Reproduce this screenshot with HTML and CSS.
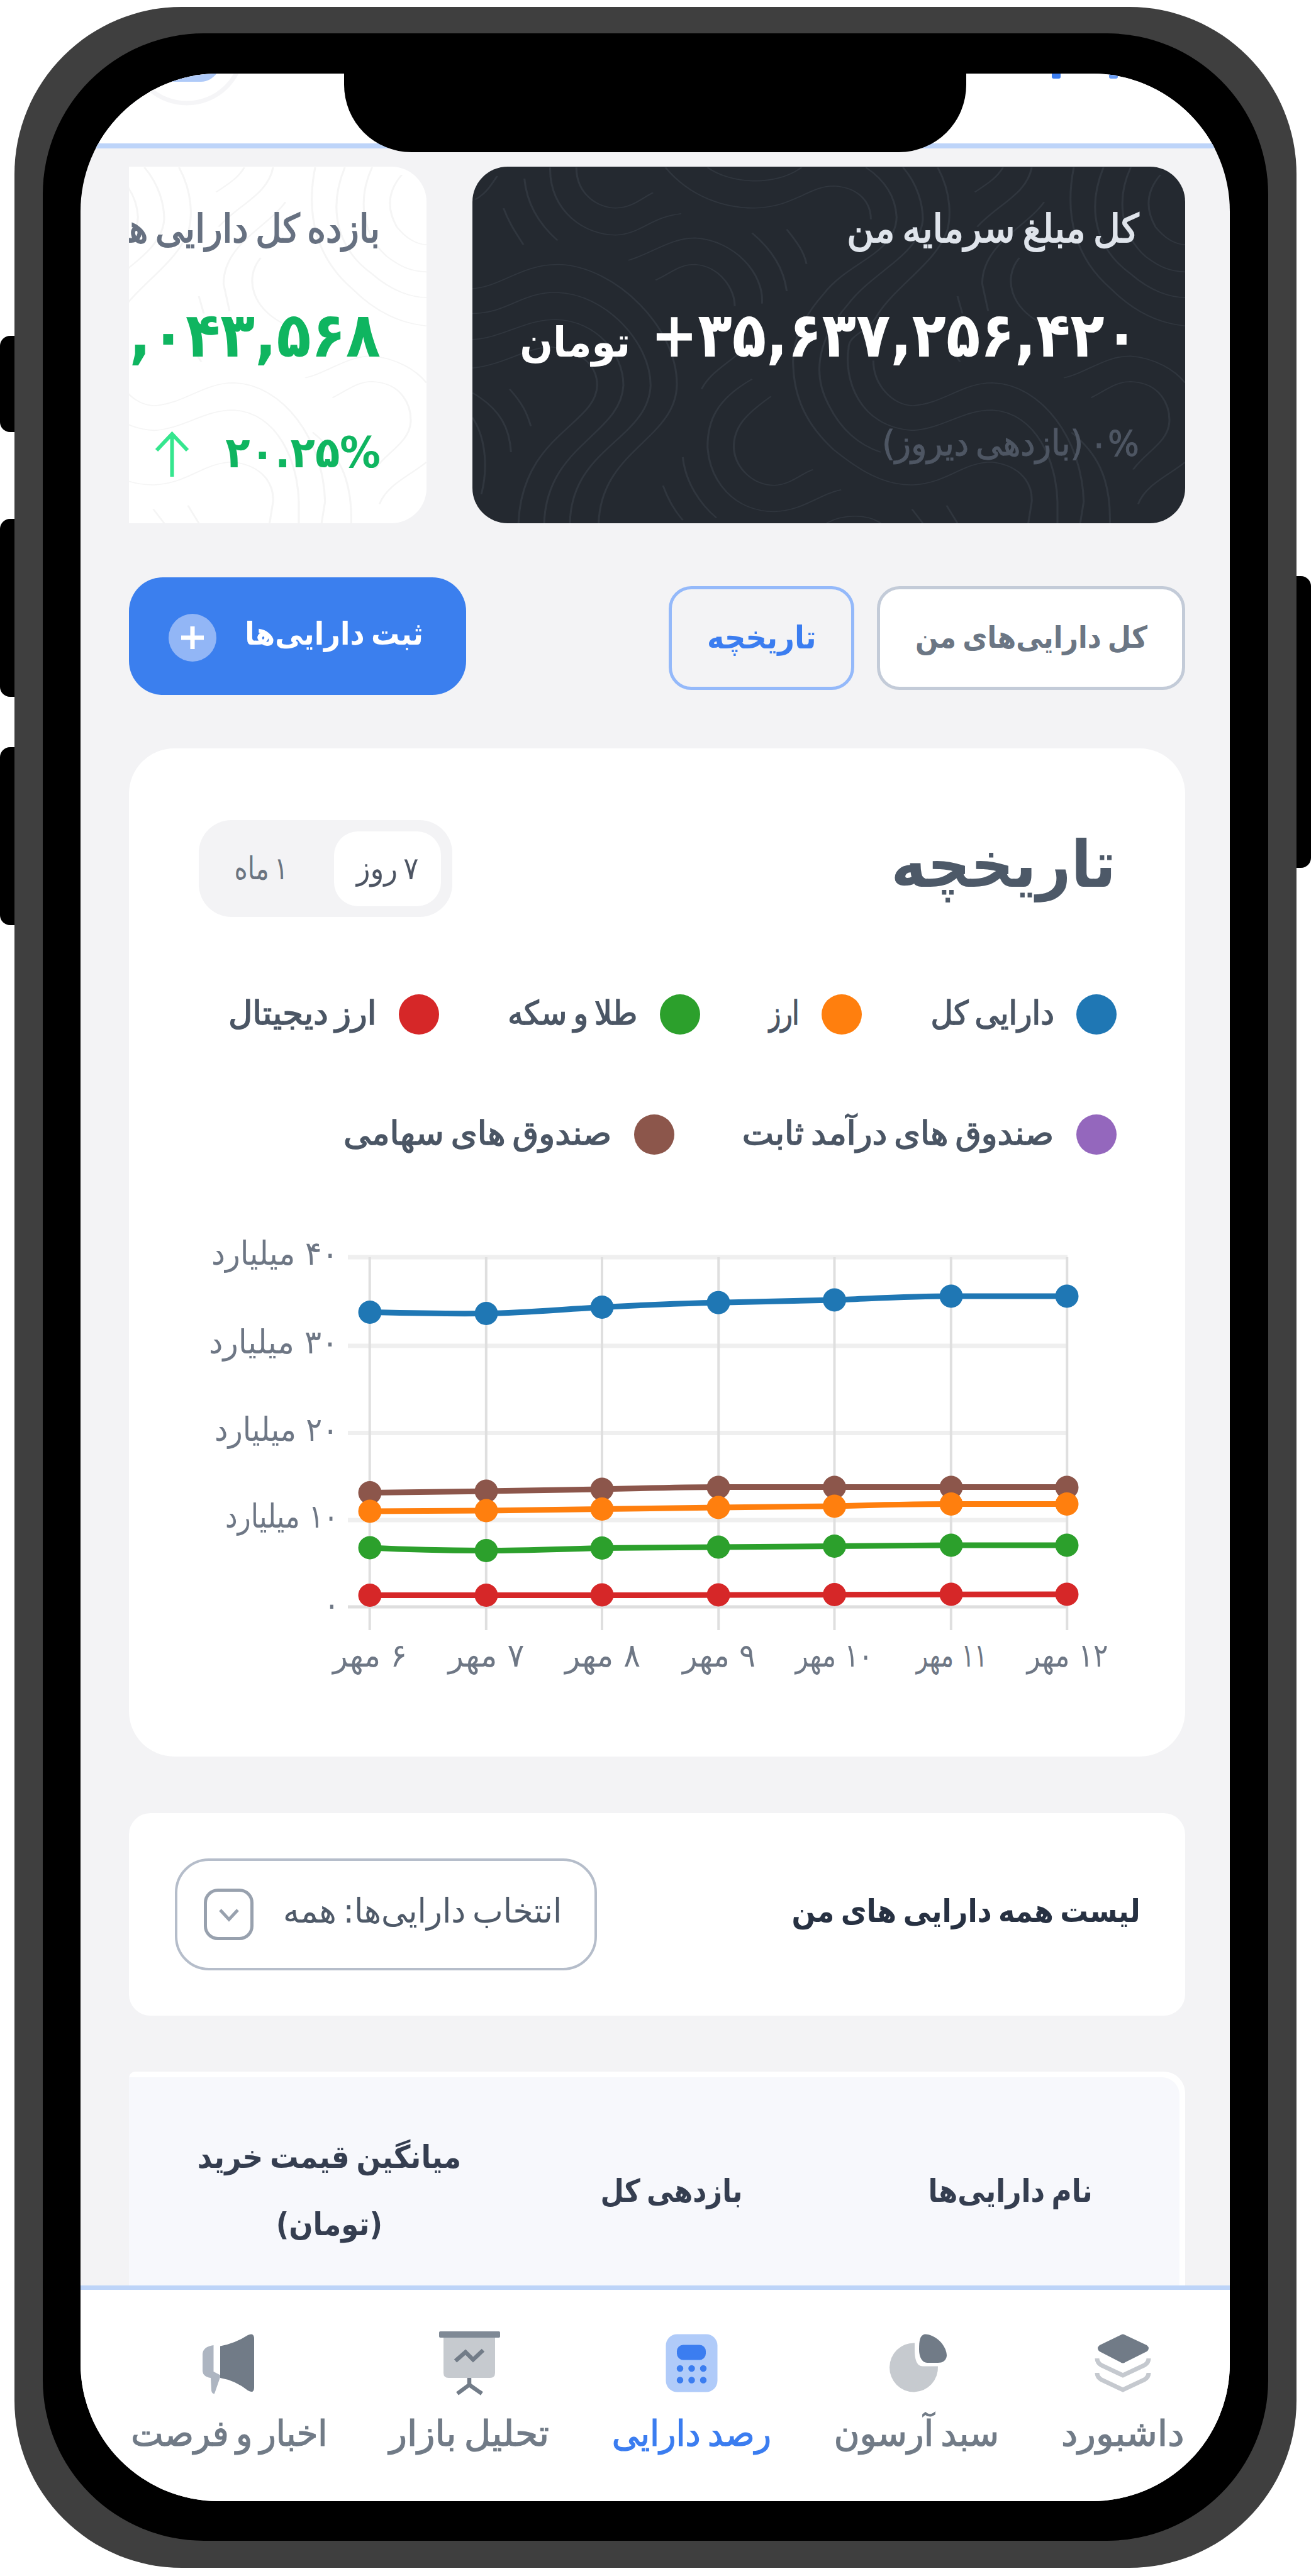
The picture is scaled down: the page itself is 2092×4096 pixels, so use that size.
FILE: index.html
```html
<!DOCTYPE html>
<html lang="fa" dir="rtl">
<head>
<meta charset="utf-8">
<title>رصد دارایی</title>
<link rel="stylesheet" href="styles.css">
</head>
<body>
<svg class="defs" width="0" height="0">
  <symbol id="contours" viewBox="90 47 1440 1440" preserveAspectRatio="none">
    <path d="M95 180C115 160 125 130 140 85M195 95C200 200 225 280 262 345M153 215C165 280 180 320 193 362M247 50C245 230 320 325 380 323C430 320 450 250 512 237M300 50C300 160 345 215 380 214C415 212 435 170 455 152M480 50C530 170 600 215 660 214C740 210 770 125 820 125C870 130 895 190 895 260M565 50C610 115 700 130 755 50M885 50C930 110 945 180 947 250C945 400 850 430 800 560C760 650 735 750 738 850C740 980 765 1090 820 1190C870 1270 920 1335 980 1332C1050 1325 1080 1240 1140 1240C1200 1255 1222 1330 1220 1400L1213 1487M960 50C990 120 1000 200 1000 260C995 400 900 470 850 600C780 760 780 900 810 1010C835 1110 870 1170 915 1200M1030 50C1060 160 1055 260 1050 300C1030 430 950 520 910 640C890 720 850 720 850 780C840 900 870 1100 980 1112C1040 1105 1080 1030 1140 1030C1230 1040 1270 1240 1272 1400V1487M900 830C900 930 940 1012 980 1012C1040 1005 1080 920 1140 920C1240 925 1322 1150 1325 1400L1318 1487M1300 1120C1350 1200 1380 1300 1378 1487"/>
    <path d="M405 425C450 400 490 335 540 335C620 345 680 480 675 600M460 505C490 480 505 442 540 442C590 450 620 540 620 610M90 540C150 530 190 440 265 442C380 450 505 700 503 930C500 1150 350 1190 345 1487M90 640C160 640 190 552 260 555C360 560 450 760 450 930C445 1150 290 1180 287 1487M90 745C150 740 200 660 260 665C340 670 395 800 395 930C390 1130 240 1170 235 1487M90 860C150 850 200 775 250 775C310 790 342 850 342 930C340 1090 190 1130 183 1487M655 315C700 390 720 470 725 550M725 300C745 350 760 390 765 440"/>
    <path d="M1105 150C1135 110 1150 90 1162 50M1220 50C1210 160 1150 200 1110 290M1245 190C1210 290 1120 360 1120 520L1132 630M1305 50C1285 250 1310 420 1380 540C1430 640 1480 680 1530 690M1365 50C1330 220 1350 380 1420 480C1460 550 1500 575 1530 575M1420 50C1390 180 1400 320 1450 410C1480 455 1500 470 1530 472M1480 80C1450 150 1450 220 1470 290C1490 340 1510 360 1530 362M1195 415C1160 500 1180 620 1240 680M1285 900C1330 880 1370 810 1420 812C1470 820 1510 870 1530 920M1340 980C1370 950 1390 915 1420 915C1480 920 1500 1010 1498 1080C1495 1160 1450 1200 1425 1270M1530 1240C1500 1290 1450 1330 1435 1410M1070 570L1080 640M1060 790L1075 835"/>
    <path d="M553 945C570 880 600 850 635 790M655 905C580 990 565 1080 565 1180C570 1320 620 1440 700 1440C760 1435 790 1370 835 1352M693 975C640 1050 618 1100 618 1180C620 1260 655 1334 700 1334C735 1330 755 1285 778 1270M90 960C150 1030 165 1110 168 1200M165 945C190 1000 200 1040 208 1095M90 1060C120 1150 120 1280 108 1370M515 1220C520 1320 550 1410 583 1465M475 1335C485 1390 500 1440 515 1475M805 1487C840 1448 890 1450 915 1487M978 1430L1000 1487M1048 1415L1070 1487"/>
  </symbol>
</svg>

<div class="stage">
  <i class="side side-mute"></i>
  <i class="side side-up"></i>
  <i class="side side-down"></i>
  <i class="side side-power"></i>
  <div class="frame">
    <div class="bezel">
      <div class="screen">
        <div class="notch"></div>

        <header class="topbar">
          <svg viewBox="0 0 1826 111">
            <circle cx="168" cy="-42" r="89" fill="none" stroke="#f5f5f7" stroke-width="7"/>
            <path d="M110 -20H230C220 -8 212 13 190 13H110Z" fill="#afcaf8"/>
            <rect x="1543" y="-6" width="14" height="14" rx="3" fill="#3b7df0"/>
            <rect x="1634" y="-6" width="14" height="14" rx="3" fill="#6a9df4"/>
          </svg>
        </header>

        <main class="content">
          <section class="cards">
            <article class="card card-dark">
              <svg class="contours"><use href="#contours"/></svg>
              <div class="slot t-total"><span>کل مبلغ سرمایه من</span></div>
              <div class="amount">
                <div class="slot t-sum"><span dir="ltr">+۳۵,۶۳۷,۲۵۶,۴۲۰</span></div>
                <div class="slot t-toman"><span>تومان</span></div>
              </div>
              <div class="slot t-yday"><span>۰% (بازدهی دیروز)</span></div>
            </article>
            <article class="card card-light">
              <svg class="contours"><use href="#contours"/></svg>
              <div class="slot t-yield"><span>بازده کل دارایی ها</span></div>
              <div class="amount"><div class="slot t-profit"><span dir="ltr">,۰۴۳,۵۶۸</span></div></div>
              <div class="change">
                <div class="slot t-pct"><span dir="ltr">۲۰.۲۵%</span></div>
                <svg class="arrow" viewBox="0 0 53 72"><path d="M26.500 71V4M2 29L26.500 3L51 29"/></svg>
              </div>
            </article>
          </section>

          <section class="actions">
            <div class="tabs">
              <div class="tab tab-all"><div class="slot t-all"><span>کل دارایی‌های من</span></div></div>
              <div class="tab tab-hist"><div class="slot t-hist"><span>تاریخچه</span></div></div>
            </div>
            <div class="add">
              <div class="slot t-add"><span>ثبت دارایی‌ها</span></div>
              <svg class="plus" viewBox="0 0 76 76"><circle cx="38" cy="38" r="38"/><path d="M20 38H56M38 20V56"/></svg>
            </div>
          </section>

          <section class="history">
            <div class="history-head">
              <h2 class="slot t-title"><span>تاریخچه</span></h2>
              <div class="toggle">
                <div class="pill"><div class="slot t-7"><span>۷ روز</span></div></div>
                <div class="slot t-1"><span>۱ ماه</span></div>
              </div>
            </div>
            <div class="legend">
              <div class="legend-row">
                <div class="key blue"><i></i><div class="slot l-total"><span>دارایی کل</span></div></div>
                <div class="key orange"><i></i><div class="slot l-fx"><span>ارز</span></div></div>
                <div class="key green"><i></i><div class="slot l-gold"><span>طلا و سکه</span></div></div>
                <div class="key red"><i></i><div class="slot l-crypto"><span>ارز دیجیتال</span></div></div>
              </div>
              <div class="legend-row">
                <div class="key purple"><i></i><div class="slot l-fixed"><span>صندوق های درآمد ثابت</span></div></div>
                <div class="key brown"><i></i><div class="slot l-stock"><span>صندوق های سهامی</span></div></div>
              </div>
            </div>
            <svg class="chart" viewBox="204 1939 1679 780">
              <path class="grid" d="M552 1997H1696M552 2138H1696M552 2276.500H1696M552 2415H1696"/>
              <path class="grid base" d="M552 2553H1696"/>
              <path class="grid vert" d="M586.700 1997V2590M771.800 1997V2590M956 1997V2590M1141.300 1997V2590M1325.500 1997V2590M1510.800 1997V2590M1695.300 1997V2590"/>
              <g class="ylab">
                <text x="537" y="2009" textLength="202" lengthAdjust="spacingAndGlyphs">۴۰ میلیارد</text>
                <text x="537" y="2150" textLength="206" lengthAdjust="spacingAndGlyphs">۳۰ میلیارد</text>
                <text x="537" y="2289" textLength="197" lengthAdjust="spacingAndGlyphs">۲۰ میلیارد</text>
                <text x="537" y="2427" textLength="180" lengthAdjust="spacingAndGlyphs">۱۰ میلیارد</text>
                <text x="539" y="2567">۰</text>
              </g>
              <g class="xlab">
                <text x="587" y="2648" textLength="118" lengthAdjust="spacingAndGlyphs">۶ مهر</text>
                <text x="772" y="2648" textLength="121" lengthAdjust="spacingAndGlyphs">۷ مهر</text>
                <text x="957" y="2648" textLength="120" lengthAdjust="spacingAndGlyphs">۸ مهر</text>
                <text x="1142" y="2648" textLength="116" lengthAdjust="spacingAndGlyphs">۹ مهر</text>
                <text x="1325" y="2648" textLength="123" lengthAdjust="spacingAndGlyphs">۱۰ مهر</text>
                <text x="1512" y="2648" textLength="113" lengthAdjust="spacingAndGlyphs">۱۱ مهر</text>
                <text x="1696" y="2648" textLength="129" lengthAdjust="spacingAndGlyphs">۱۲ مهر</text>
              </g>
              <g class="series brown"><path d="M587 2371.600L772 2369L956 2366C1018 2364.500 1080 2362.500 1141 2362.500H1695"/><path class="dots" d="M587 2371.600h0M772 2369h0M956 2366h0M1141 2363h0M1325.500 2363h0M1511 2363h0M1695 2363h0"/></g>
              <g class="series orange"><path d="M587 2401L772 2400L956 2397.500L1141 2395L1325.500 2393C1390 2391 1450 2389.500 1511 2389.500H1695"/><path class="dots" d="M587 2401h0M772 2400h0M956 2397.500h0M1141 2395h0M1325.500 2393h0M1511 2389.500h0M1695 2389.500h0"/></g>
              <g class="series green"><path d="M587 2459C650 2462 710 2463.500 772 2463.500S890 2461 956 2459.500L1141 2458L1325.500 2456.500L1511 2455H1695"/><path class="dots" d="M587 2459h0M772 2463.500h0M956 2459.500h0M1141 2458h0M1325.500 2456.500h0M1511 2455h0M1695 2455h0"/></g>
              <g class="series red"><path d="M587 2534.500H956L1695 2533"/><path class="dots" d="M587 2534.500h0M772 2534.500h0M956 2534h0M1141 2534h0M1325.500 2533.500h0M1511 2533h0M1695 2533h0"/></g>
              <g class="series blue"><path d="M587 2084.500C650 2086 710 2087.500 772 2086.500S890 2080 956 2076.500S1080 2070 1141 2069.200L1325.500 2065C1390 2062.500 1450 2059 1511 2059H1695"/><path class="dots" d="M587 2084.500h0M772 2086.500h0M956 2076.500h0M1141 2069.200h0M1325.500 2065h0M1511 2059h0M1695 2059h0"/></g>
            </svg>
          </section>

          <section class="listbar">
            <h3 class="slot t-list"><span>لیست همه دارایی های من</span></h3>
            <div class="select">
              <div class="slot t-select"><span>انتخاب دارایی‌ها: همه</span></div>
              <svg class="chev" viewBox="0 0 79 82"><rect x="2.500" y="2.500" width="74" height="77" rx="20"/><path d="M26 34L40 49L54 34"/></svg>
            </div>
          </section>

          <section class="table">
            <div class="thead">
              <div class="th"><div class="slot t-name"><span>نام دارایی‌ها</span></div></div>
              <div class="th"><div class="slot t-ret"><span>بازدهی کل</span></div></div>
              <div class="th th-two">
                <div class="slot t-avg"><span>میانگین قیمت خرید</span></div>
                <div class="slot t-tmn"><span>(تومان)</span></div>
              </div>
            </div>
          </section>
        </main>

        <nav class="nav">
          <div class="item">
            <svg viewBox="0 0 92 92"><path class="dk" d="M42 2Q46 -1 50 2L84 18Q90 23 84 28L50 45Q46 48 42 45L9 28Q3 23 9 18Z"/><path class="ln" d="M5 39Q5 46 12 50L46 66L80 50Q87 46 87 39M5 62Q5 69 12 73L46 89L80 73Q87 69 87 62"/></svg>
            <div class="slot n-dash"><span>داشبورد</span></div>
          </div>
          <div class="item">
            <svg class="pie" viewBox="0 0 92 92"><path class="lt" d="M41 14.500V25C41 40 44 51.500 54 51.500H78A38.500 39 0 1 1 41 14.500Z"/><path class="dk" d="M57 .5C72 0 92 17 92 35C91 43 85 46 78 46H61C53 46 48 37 48 25C48 12 49 2 57 .5Z"/></svg>
            <div class="slot n-basket"><span>سبد آرسون</span></div>
          </div>
          <div class="item active">
            <svg viewBox="0 0 92 92"><rect x="5.500" y=".5" width="82" height="92" rx="18" fill="#b0cbf9"/><rect x="23" y="17.500" width="46" height="24" rx="10" fill="#3b7df0"/><path d="M28 55h0M46.500 55h0M65 55h0M28 73.500h0M46.500 73.500h0M65 73.500h0" stroke="#3b7df0" stroke-width="10.500" stroke-linecap="round"/></svg>
            <div class="slot n-track"><span>رصد دارایی</span></div>
          </div>
          <div class="item">
            <svg viewBox="0 0 92 92"><path class="lt" d="M5 5H87V62Q87 70 79 70H13Q5 70 5 62Z"/><rect x="-2" y="-4" width="97" height="10" rx="2" fill="#7f8995"/><path d="M24 43L40 29L52 41L68 26M46 70V83M46 81L27 95M46 81L66 95" fill="none" stroke="#727c88" stroke-width="6.500"/></svg>
            <div class="slot n-market"><span>تحلیل بازار</span></div>
          </div>
          <div class="item">
            <svg viewBox="0 0 92 92"><path d="M21.500 18V60L33 66L23 95Q19 96 18 90L17 70Q4 68 4 58V32Q5 20 21.500 18Z" fill="#adb5c1"/><path class="dk" d="M32 19.500Q56 15 76 2Q86 -3 86 8V85Q86 96 76 90Q56 74 32 70Z"/></svg>
            <div class="slot n-news"><span>اخبار و فرصت</span></div>
          </div>
        </nav>
      </div>
    </div>
  </div>
</div>
</body>
</html>
```
FILE: styles.css
```css
* { box-sizing: border-box; }
html, body { margin: 0; background: #fff; }
body { font-family: "DejaVu Sans Condensed", "DejaVu Sans", sans-serif; font-weight: 400; }
h2, h3 { margin: 0; font-weight: 700; }
svg { display: block; overflow: visible; flex: none; }
.defs { position: absolute; }

/* Device shell */
.stage { position: relative; width: 2092px; height: 4096px; padding: 11px 31px 13px 23px; overflow: hidden; }
.side { position: absolute; background: #000; width: 30px; }
.side-mute { left: 0; top: 534px; height: 153px; border-radius: 16px 0 0 16px; }
.side-up { left: 0; top: 825px; height: 283px; border-radius: 16px 0 0 16px; }
.side-down { left: 0; top: 1188px; height: 283px; border-radius: 16px 0 0 16px; }
.side-power { right: 8px; top: 916px; height: 464px; border-radius: 0 16px 16px 0; }
.frame { position: relative; height: 4072px; padding: 42px 45px 43px; background: #3f3f3f; border-radius: 266px; }
.bezel { height: 100%; padding: 64px 61.500px 63px 60px; background: #000; border-radius: 256px; }
.screen { position: relative; display: flex; flex-direction: column; height: 100%; background: #f3f3f5; border-radius: 219px; overflow: hidden; }
.notch { position: absolute; z-index: 2; left: 419px; top: -2px; width: 989px; height: 127px; background: #000; border-radius: 0 0 107px 107px; }

/* Text slots hold the label's width, the label is fitted into it */
.slot { flex: none; line-height: 1.2; word-spacing: -.1em; }
.slot span { display: block; width: max-content; white-space: nowrap; transform: translate(1px, 2px) scaleX(var(--sx, 1)); transform-origin: 100% 50%; }
.item .slot span { transform: scaleX(var(--sx, 1)); }

.topbar { flex: none; height: 119px; background: #fff; border-bottom: 8px solid #bdd4f9; overflow: hidden; }
.topbar svg { width: 1826px; height: 111px; }

.content { flex: 1; min-height: 0; overflow: hidden; padding: 29px 71px 0 77px; display: flex; flex-direction: column; }

/* Balance cards */
.cards { flex: none; display: flex; gap: 73px; overflow: hidden; }
.card { position: relative; flex: none; width: 1133px; height: 567px; padding: 60px 74px 0; border-radius: 56px; overflow: hidden; }
.card .slot { position: relative; }
.card-dark { background: #242930; }
.card-light { background: #fff; }
.contours { position: absolute; inset: 0; width: 100%; height: 100%; fill: none; stroke-width: 4; }
.card-dark .contours { stroke: #30363e; }
.card-light .contours { stroke: #f5f5f5; }
.amount { display: flex; align-items: baseline; justify-content: flex-start; gap: 38px; height: 114px; margin: 75px 0 81px; }
.change { display: flex; align-items: center; gap: 57px; margin-top: 87px; }
.card-light .amount { margin-bottom: 0; }
.t-total { width: 464px; font-size: 62px; --sx: 1.054; color: #dfe4eb; -webkit-text-stroke: 1.800px; }
.t-sum { width: 770px; font-size: 99px; line-height: 114px; font-weight: 700; --sx: 1.002; color: #fff; }
.t-toman { width: 173px; font-size: 66px; font-weight: 700; --sx: 1.040; color: #fff; }
.t-yday { width: 410px; font-size: 56px; --sx: 1.040; color: #4e5663; -webkit-text-stroke: 1px; }
.t-yield { width: 500px; font-size: 62px; --sx: 1.020; color: #677181; -webkit-text-stroke: 1.800px; }
.t-profit { width: 400px; font-size: 99px; line-height: 114px; font-weight: 700; --sx: 1.014; color: #0fb560; }
.t-pct { width: 247px; font-size: 68px; font-weight: 700; --sx: 1.055; color: #0fb560; }
.arrow { width: 53px; height: 72px; margin-top: 12px; fill: none; stroke: #35e68e; stroke-width: 6; position: relative; }

/* Tabs and add button */
.actions { flex: none; display: flex; justify-content: space-between; align-items: center; height: 187px; margin-top: 86px; }
.tabs { display: flex; gap: 36px; padding-top: 5px; }
.tab { display: flex; align-items: center; justify-content: center; height: 165px; padding-bottom: 4px; border: 5px solid #c3cbd8; border-radius: 36px; }
.tab-all { width: 490px; background: #fff; }
.tab-hist { width: 295px; border-color: #94b9fa; }
.t-all { width: 369px; font-size: 48px; font-weight: 700; --sx: .992; color: #6b7684; }
.t-hist { width: 174px; font-size: 50px; font-weight: 700; --sx: 1.030; color: #3b7df0; }
.add { display: flex; align-items: center; gap: 45px; width: 536px; height: 187px; padding-right: 69px; background: #3b7fee; border-radius: 54px; }
.t-add { width: 283px; margin-bottom: 12px; font-size: 50px; font-weight: 700; color: #fff; }
.plus { width: 76px; height: 76px; margin-top: 5px; }
.plus circle { fill: #92b6f6; }
.plus path { stroke: #fff; stroke-width: 7; }

/* History chart */
.history { flex: none; height: 1603px; margin-top: 85px; padding-top: 114px; background: #fff; border-radius: 72px; }
.history-head { display: flex; justify-content: space-between; align-items: center; height: 154px; padding: 0 110px 0 111px; }
.t-title { width: 358px; margin-bottom: 16px; font-size: 102px; --sx: 1.040; color: #4d5968; }
.toggle { display: flex; align-items: center; gap: 74px; width: 403px; height: 154px; padding-right: 18px; background: #f3f3f5; border-radius: 52px; }
.pill { display: flex; align-items: center; justify-content: center; width: 170px; height: 119px; background: #fff; border-radius: 38px; }
.t-7, .t-1 { margin-bottom: 4px; font-size: 50px; }
.t-7 { width: 97px; color: #4d5563; }
.t-1 { width: 86px; --sx: .900; color: #6b7480; }
.legend { display: flex; flex-direction: column; gap: 127px; margin: 123px 109px 0; }
.legend-row { display: flex; height: 64px; }
.key { display: flex; align-items: center; gap: 36px; margin-left: 109px; }
.key i { width: 64px; height: 64px; border-radius: 50%; background: currentColor; }
.key .slot { margin-bottom: 8px; font-size: 52px; color: #4b5665; -webkit-text-stroke: 1.500px; }
.blue { color: #1f77b4; }
.orange { color: #ff7f0e; }
.green { color: #2ca02c; }
.red { color: #d62728; }
.purple { color: #9467bd; }
.brown { color: #8c564b; }
.l-total { width: 196px; --sx: 1.040; }
.l-fx { width: 48px; --sx: .820; }
.l-gold { width: 206px; --sx: 1.045; }
.l-crypto { width: 234px; --sx: 1.130; }
.l-fixed { width: 494px; --sx: 1.141; }
.l-stock { width: 427px; --sx: 1.148; }
.chart { width: 1679px; height: 780px; margin-top: 105px; }
.grid { fill: none; stroke: #efefef; stroke-width: 7; }
.grid.base { stroke: #dedede; stroke-width: 5; }
.grid.vert { stroke: #dfdfdf; stroke-width: 4; }
.ylab, .xlab { direction: rtl; font-size: 52px; fill: #6e7785; }
.xlab { text-anchor: middle; }
.series { fill: none; stroke: currentColor; stroke-width: 9; }
.series .dots { stroke-width: 37; stroke-linecap: round; }

/* List heading */
.listbar { flex: none; display: flex; align-items: center; justify-content: space-between; height: 322px; margin-top: 90px; padding: 0 72px 0 73px; background: #fff; border-radius: 34px; }
.t-list { width: 555px; margin-bottom: 14px; font-size: 50px; --sx: .990; color: #273142; }
.select { display: flex; align-items: center; gap: 46px; width: 671px; height: 178px; padding-right: 53px; border: 4px solid #b5bdca; border-radius: 54px; }
.t-select { width: 443px; margin-bottom: 14px; font-size: 54px; --sx: 1.065; color: #4f5a69; }
.chev { width: 79px; height: 82px; fill: none; stroke: #98a1ae; stroke-width: 5; }

.table { flex: none; height: 380px; margin-top: 89px; padding: 9px 9px 0 0; background: #fff; border-radius: 10px 34px 0 0; }
.thead { display: grid; grid-template-columns: 538px 541px 545px; height: 371px; background: #f7f8fc; border-radius: 0 28px 0 0; }
.th { display: flex; flex-direction: column; align-items: center; justify-content: center; height: 358px; font-size: 50px; font-weight: 700; color: #353e50; }
.th-two .slot { line-height: 107.500px; }
.t-name { width: 261px; --sx: .976; }
.t-ret { width: 226px; --sx: .956; }
.t-avg { width: 419px; --sx: 1.010; }
.t-tmn { width: 168px; }

/* Bottom navigation */
.nav { flex: none; display: flex; justify-content: space-between; height: 343px; padding: 70px 72px 0 80px; background: #fff; border-top: 7px solid #bdd4f8; }
.item { display: flex; flex-direction: column; align-items: center; gap: 32px; color: #717b87; }
.item svg { width: 92px; height: 92px; }
.item .pie { margin-left: 5px; }
.item .slot { font-size: 57px; -webkit-text-stroke: 1.200px; }
.item.active { color: #3b7df0; }
.dk { fill: #717b87; }
.lt { fill: #c6cacf; }
.ln { fill: none; stroke: #c5c9cf; stroke-width: 7; }
.n-dash { width: 196px; --sx: 1.153; }
.n-basket { width: 263px; --sx: 1.084; }
.n-track { width: 254px; --sx: 1.060; }
.n-market { width: 254px; --sx: 1.140; }
.n-news { width: 312px; --sx: 1.060; }
```
